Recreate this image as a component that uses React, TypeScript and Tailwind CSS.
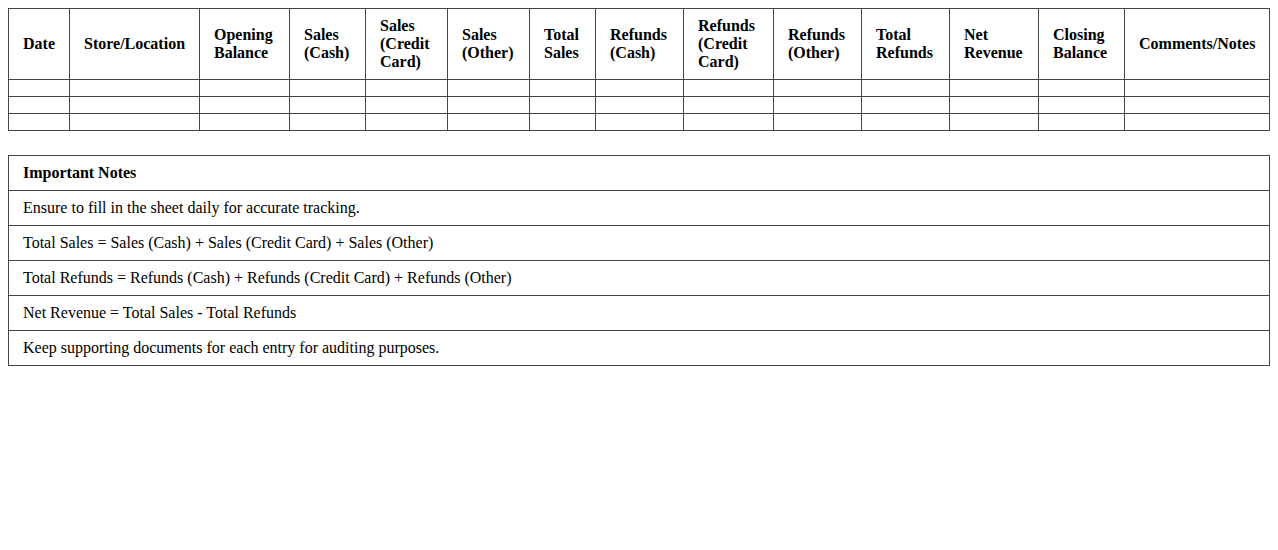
const headers = [
    'Date',
    'Store/Location',
    'Opening Balance',
    'Sales (Cash)',
    'Sales (Credit Card)',
    'Sales (Other)',
    'Total Sales',
    'Refunds (Cash)',
    'Refunds (Credit Card)',
    'Refunds (Other)',
    'Total Refunds',
    'Net Revenue',
    'Closing Balance',
    'Comments/Notes',
]

const colWidths = [61, 130, 90, 76, 82, 82, 66, 88, 90, 88, 88, 89, 86, 145]

const notes = [
    'Ensure to fill in the sheet daily for accurate tracking.',
    'Total Sales = Sales (Cash) + Sales (Credit Card) + Sales (Other)',
    'Total Refunds = Refunds (Cash) + Refunds (Credit Card) + Refunds (Other)',
    'Net Revenue = Total Sales - Total Refunds',
    'Keep supporting documents for each entry for auditing purposes.',
]

export default function App() {
    return (
        <div className="p-2 bg-white text-black font-['Liberation_Serif',serif] text-[16px] leading-[18px]">
            {/* Daily sheet */}
            <table className="w-full table-fixed border-collapse border border-[#444]">
                <colgroup>
                    {colWidths.map((w, i) => (
                        <col key={i} style={{ width: w }} />
                    ))}
                </colgroup>
                <thead>
                    <tr>
                        {headers.map((h) => (
                            <th
                                key={h}
                                className={`border border-[#444] py-2 px-[14px] font-bold ${h === 'Date' || h === 'Store/Location' || h === 'Comments/Notes' ? 'text-center' : 'text-left'}`}
                            >
                                {h}
                            </th>
                        ))}
                    </tr>
                </thead>
                <tbody>
                    {[0, 1, 2].map((r) => (
                        <tr key={r}>
                            {headers.map((h) => (
                                <td key={h} className="border border-[#444] py-2 px-[14px] h-[17px]"></td>
                            ))}
                        </tr>
                    ))}
                </tbody>
            </table>

            {/* Notes */}
            <table className="w-full mt-6 border-collapse border border-[#444]">
                <tbody>
                    <tr>
                        <th className="border border-[#444] py-2 px-[14px] text-left font-bold">Important Notes</th>
                    </tr>
                    {notes.map((n) => (
                        <tr key={n}>
                            <td className="border border-[#444] py-2 px-[14px]">{n}</td>
                        </tr>
                    ))}
                </tbody>
            </table>
        </div>
    )
}
